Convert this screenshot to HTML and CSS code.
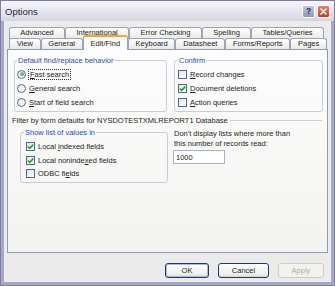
FILE: index.html
```html
<!DOCTYPE html>
<html lang="en">
<head>
    <meta charset="UTF-8">
    <title>Options</title>
    <link rel="stylesheet" href="styles.css">
</head>
<body>
    <div class="window">
        <div class="titlebar">
            <span class="title">Options</span>
            <div class="caption-buttons">
                <span class="cap help">?</span>
                <span class="cap close">
                    <svg width="7" height="7" viewBox="0 0 7 7"><path d="M1 1L6 6M6 1L1 6" stroke="#fff" stroke-width="1.6" stroke-linecap="round"/></svg>
                </span>
            </div>
        </div>

        <div class="client">
            <div class="tabs">
                <div class="tab-row back">
                    <div class="tab">Advanced</div>
                    <div class="tab">International</div>
                    <div class="tab">Error Checking</div>
                    <div class="tab">Spelling</div>
                    <div class="tab">Tables/Queries</div>
                </div>
                <div class="tab-row front">
                    <div class="tab">View</div>
                    <div class="tab">General</div>
                    <div class="tab selected">Edit/Find</div>
                    <div class="tab">Keyboard</div>
                    <div class="tab">Datasheet</div>
                    <div class="tab">Forms/Reports</div>
                    <div class="tab">Pages</div>
                </div>
            </div>

            <div class="panel">
                <div class="top-row">
                    <fieldset class="group find-group">
                        <legend>Default find/replace behavior</legend>
                        <div class="option"><span class="radio checked"></span><span class="focus"><u>F</u>ast search</span></div>
                        <div class="option"><span class="radio"></span><span><u>G</u>eneral search</span></div>
                        <div class="option"><span class="radio"></span><span><u>S</u>tart of field search</span></div>
                    </fieldset>
                    <fieldset class="group confirm-group">
                        <legend>Confirm</legend>
                        <div class="option"><span class="check"></span><span><u>R</u>ecord changes</span></div>
                        <div class="option"><span class="check checked"><svg width="7" height="7" viewBox="0 0 7 7"><path d="M1 3.6L2.8 5.4L6.2 1.6" fill="none" stroke="#21a121" stroke-width="1.6"/></svg></span><span><u>D</u>ocument deletions</span></div>
                        <div class="option"><span class="check"></span><span><u>A</u>ction queries</span></div>
                    </fieldset>
                </div>

                <div class="filter-head">
                    <span>Filter by form defaults for NYSDOTESTXMLREPORT1 Database</span>
                    <span class="rule"></span>
                </div>

                <div class="filter-body">
                    <fieldset class="group list-group">
                        <legend>Show list of values in</legend>
                        <div class="option"><span class="check checked"><svg width="7" height="7" viewBox="0 0 7 7"><path d="M1 3.6L2.8 5.4L6.2 1.6" fill="none" stroke="#21a121" stroke-width="1.6"/></svg></span><span>Local <u>i</u>ndexed fields</span></div>
                        <div class="option"><span class="check checked"><svg width="7" height="7" viewBox="0 0 7 7"><path d="M1 3.6L2.8 5.4L6.2 1.6" fill="none" stroke="#21a121" stroke-width="1.6"/></svg></span><span>Local noninde<u>x</u>ed fields</span></div>
                        <div class="option"><span class="check"></span><span>ODBC fi<u>e</u>lds</span></div>
                    </fieldset>
                    <div class="records">
                        <div class="records-text">Don't display lists where more than<br>this number of records read:</div>
                        <input class="records-input" type="text" value="1000">
                    </div>
                </div>
            </div>

            <div class="buttons">
                <button class="btn default">OK</button>
                <button class="btn cancel">Cancel</button>
                <button class="btn apply" disabled>Apply</button>
            </div>
        </div>
    </div>
</body>
</html>
```

FILE: styles.css
```css
body {
    margin: 0;
    font-family: "Liberation Sans", Arial, sans-serif;
    font-size: 7.5px;
    color: #1e1e1e;
}
.window {
    width: 335px;
    height: 286px;
    box-sizing: border-box;
    border: 1px solid #7d7da6;
    background-color: #a6a6c8;
    display: flex;
    flex-direction: column;
}
.titlebar {
    height: 20px;
    display: flex;
    align-items: center;
    padding: 0 4px 0 4px;
    background: linear-gradient(#f6f6fa, #e4e4ec 55%, #d6d6e0);
}
.title {
    flex: 1;
    font-size: 9.5px;
    color: #2a2a3a;
}
.caption-buttons {
    display: flex;
    gap: 2px;
}
.cap {
    width: 13px;
    height: 13px;
    box-sizing: border-box;
    border: 1px solid #fff;
    border-radius: 2px;
    display: flex;
    align-items: center;
    justify-content: center;
}
.help {
    background: linear-gradient(#c2cae0, #8c96b8);
    color: #1e2c5c;
    font-weight: bold;
    font-size: 8.5px;
}
.close {
    background: linear-gradient(#ec8068, #c83a22);
}
.client {
    flex: 1;
    margin: 0 3px 3px;
    background-color: #ebebeb;
    display: flex;
    flex-direction: column;
}

/* tabs */
.tabs {
    padding: 6px 0 0 5px;
}
.tab-row {
    display: flex;
}
.tab-row.back {
    width: 315px;
}
.tab-row.front {
    width: 318px;
    margin-top: -1px;
}
.tab {
    flex: 1 1 auto;
    height: 12px;
    box-sizing: border-box;
    padding: 0 6px;
    border: 1px solid #9ea3b8;
    border-bottom: none;
    border-radius: 3px 3px 0 0;
    background: linear-gradient(#fefefe, #e9e9e6);
    text-align: center;
    line-height: 10px;
    white-space: nowrap;
}
.front .tab {
    height: 11px;
}
.tab.selected {
    position: relative;
    z-index: 2;
    height: 15px;
    margin: -3px 0 -1px;
    padding-top: 2px;
    border-top: 2px solid #f0a838;
    background: #fcfcfc;
}

/* panel */
.panel {
    margin: 0 3px;
    height: 204px;
    box-sizing: border-box;
    border: 1px solid #919bae;
    background: linear-gradient(#fdfdfd, #f3f3f1);
    padding: 6px 4px 0 6px;
}
.top-row {
    display: flex;
    gap: 7px;
}
.group {
    margin: 0;
    padding: 2px 2px 2px;
    border: 1px solid #c9cbd8;
    border-radius: 3px;
    box-sizing: border-box;
    min-width: 0;
}
.group legend {
    padding: 0 1px;
    color: #1c4cc0;
    line-height: 9px;
}
.find-group {
    width: 153px;
}
.confirm-group {
    width: 149px;
    padding-left: 3px;
}
.option {
    display: flex;
    align-items: center;
    gap: 3px;
    height: 14px;
    white-space: nowrap;
}
.radio {
    width: 9px;
    height: 9px;
    box-sizing: border-box;
    border: 1px solid #4a6a9a;
    border-radius: 50%;
    background: linear-gradient(135deg, #e4e4de, #fff);
    display: flex;
    align-items: center;
    justify-content: center;
}
.radio.checked::after {
    content: "";
    width: 4px;
    height: 4px;
    border-radius: 50%;
    background: radial-gradient(circle at 35% 35%, #7ee07e, #1e9e1e);
}
.check {
    width: 9px;
    height: 9px;
    box-sizing: border-box;
    border: 1px solid #4a6a9a;
    background: linear-gradient(135deg, #e4e4de, #fff);
    display: flex;
    align-items: center;
    justify-content: center;
}
.focus {
    outline: 1px dotted #333;
    padding: 0 1px;
}

/* filter section */
.filter-head {
    display: flex;
    align-items: center;
    gap: 2px;
    margin: 4px 1px 0 -2px;
    line-height: 9px;
    white-space: nowrap;
}
.rule {
    flex: 1;
    border-top: 1px solid #cfd0da;
}
.filter-body {
    display: flex;
    gap: 6px;
    margin-top: 3px;
    padding-left: 6px;
}
.list-group {
    width: 148px;
    padding: 3px 3px 1px 5px;
}
.list-group legend {
    margin-left: -2px;
}
.list-group .option {
    height: 13.5px;
}
.records {
    padding-top: 1px;
}
.records-text {
    line-height: 10px;
}
.records-input {
    display: block;
    width: 52px;
    height: 14px;
    box-sizing: border-box;
    margin: 1px 0 0 -1px;
    padding: 0 2px;
    border: 1px solid #a4b4cc;
    background-color: #fff;
    font-family: inherit;
    font-size: 7.5px;
    color: #1e1e1e;
}

/* buttons */
.buttons {
    display: flex;
    justify-content: flex-end;
    gap: 9px;
    margin-top: 10px;
    padding-right: 7px;
}
.btn {
    height: 15px;
    box-sizing: border-box;
    padding: 0;
    border: 1px solid #26386a;
    border-radius: 3px;
    background: linear-gradient(#ffffff, #eeeeea 80%, #d8d4ca);
    font-family: inherit;
    font-size: 7.5px;
    color: #1e1e1e;
}
.default {
    width: 44px;
    box-shadow: inset 0 0 0 1px #a6bce8;
}
.cancel {
    width: 51px;
}
.apply {
    width: 46px;
    border-color: #cfcdc2;
    color: #b0afa6;
    background: #f2f2ee;
}
```
